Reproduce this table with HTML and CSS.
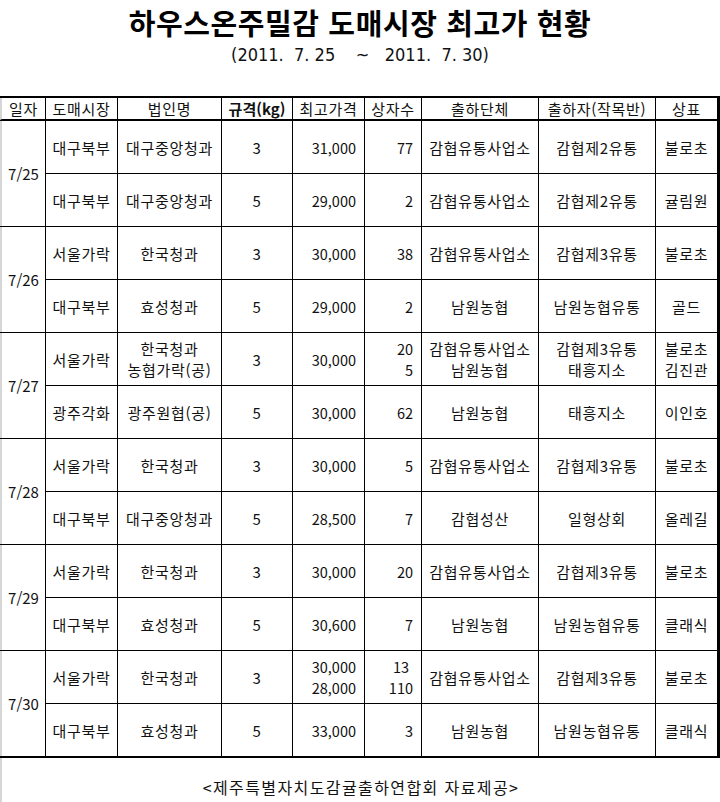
FILE: index.html
```html
<!DOCTYPE html>
<html lang="ko">
<head>
<meta charset="utf-8">
<title>하우스온주밀감 도매시장 최고가 현황</title>
<link rel="stylesheet" href="styles.css">
</head>
<body>
<div class="head">
  <h1 class="title">하우스온주밀감 도매시장 최고가 현황</h1>
  <p class="subtitle">(2011.  7. 25    ~   2011.  7. 30)</p>
</div>
<div class="grid">
  <div class="c th edge">일자</div>
  <div class="c th">도매시장</div>
  <div class="c th">법인명</div>
  <div class="c th bold">규격(kg)</div>
  <div class="c th">최고가격</div>
  <div class="c th">상자수</div>
  <div class="c th">출하단체</div>
  <div class="c th">출하자(작목반)</div>
  <div class="c th">상표</div>

  <div class="c date edge">7/25</div>
  <div class="c">대구북부</div><div class="c">대구중앙청과</div><div class="c">3</div><div class="c r">31,000</div><div class="c r">77</div><div class="c">감협유통사업소</div><div class="c">감협제2유통</div><div class="c">불로초</div>
  <div class="c">대구북부</div><div class="c">대구중앙청과</div><div class="c">5</div><div class="c r">29,000</div><div class="c r">2</div><div class="c">감협유통사업소</div><div class="c">감협제2유통</div><div class="c">귤림원</div>

  <div class="c date edge">7/26</div>
  <div class="c">서울가락</div><div class="c">한국청과</div><div class="c">3</div><div class="c r">30,000</div><div class="c r">38</div><div class="c">감협유통사업소</div><div class="c">감협제3유통</div><div class="c">불로초</div>
  <div class="c">대구북부</div><div class="c">효성청과</div><div class="c">5</div><div class="c r">29,000</div><div class="c r">2</div><div class="c">남원농협</div><div class="c">남원농협유통</div><div class="c">골드</div>

  <div class="c date edge">7/27</div>
  <div class="c">서울가락</div><div class="c">한국청과<br>농협가락(공)</div><div class="c">3</div><div class="c r">30,000</div><div class="c r">20<br>5</div><div class="c">감협유통사업소<br>남원농협</div><div class="c">감협제3유통<br>태흥지소</div><div class="c">불로초<br>김진관</div>
  <div class="c">광주각화</div><div class="c">광주원협(공)</div><div class="c">5</div><div class="c r">30,000</div><div class="c r">62</div><div class="c">남원농협</div><div class="c">태흥지소</div><div class="c">이인호</div>

  <div class="c date edge">7/28</div>
  <div class="c">서울가락</div><div class="c">한국청과</div><div class="c">3</div><div class="c r">30,000</div><div class="c r">5</div><div class="c">감협유통사업소</div><div class="c">감협제3유통</div><div class="c">불로초</div>
  <div class="c">대구북부</div><div class="c">대구중앙청과</div><div class="c">5</div><div class="c r">28,500</div><div class="c r">7</div><div class="c">감협성산</div><div class="c">일형상회</div><div class="c">올레길</div>

  <div class="c date edge">7/29</div>
  <div class="c">서울가락</div><div class="c">한국청과</div><div class="c">3</div><div class="c r">30,000</div><div class="c r">20</div><div class="c">감협유통사업소</div><div class="c">감협제3유통</div><div class="c">불로초</div>
  <div class="c">대구북부</div><div class="c">효성청과</div><div class="c">5</div><div class="c r">30,600</div><div class="c r">7</div><div class="c">남원농협</div><div class="c">남원농협유통</div><div class="c">클래식</div>

  <div class="c date edge">7/30</div>
  <div class="c">서울가락</div><div class="c">한국청과</div><div class="c">3</div><div class="c r"><span class="m">30,000<br>28,000</span></div><div class="c r"><span class="m"><span class="pad">13</span><br>110</span></div><div class="c">감협유통사업소</div><div class="c">감협제3유통</div><div class="c">불로초</div>
  <div class="c">대구북부</div><div class="c">효성청과</div><div class="c">5</div><div class="c r">33,000</div><div class="c r">3</div><div class="c">남원농협</div><div class="c">남원농협유통</div><div class="c">클래식</div>
</div>
<p class="foot">&lt;제주특별자치도감귤출하연합회 자료제공&gt;</p>
</body>
</html>
```
FILE: styles.css
```css
html, body {
  margin: 0;
  padding: 0;
  background: #fff;
}
body {
  width: 720px;
  font-family: "Noto Sans CJK KR", "Noto Sans", sans-serif;
  color: #111;
}
.head {
  padding-top: 6px;
  height: 90px;
  box-sizing: border-box;
}
.title {
  margin: 0;
  font-size: 29px;
  line-height: 32px;
  font-weight: bold;
  letter-spacing: 0.6px;
  text-align: center;
  color: #000;
}
.subtitle {
  margin: 6px 0 0;
  font-family: "Liberation Sans Narrow", "DejaVu Sans Condensed", "Noto Sans CJK KR", sans-serif;
  font-size: 18px;
  line-height: 22px;
  text-align: center;
  white-space: pre;
  color: #111;
}
.grid {
  margin-top: 6px;
  display: grid;
  grid-template-columns: 45px 71px 103px 70px 71px 56px 116px 116px 61px;
  grid-template-rows: 22px repeat(12, 52px);
  gap: 1px;
  background: #000;
  border-top: 2px solid #000;
  border-right: 3px solid #000;
  border-bottom: 2px solid #000;
  width: 717px;
}
.c {
  background: #fff;
  display: flex;
  align-items: center;
  justify-content: center;
  text-align: center;
  font-size: 15px;
  letter-spacing: 0.7px;
  line-height: 21px;
}
.th {
  font-size: 15px;
  border-bottom: 1px solid #000;
  box-sizing: border-box;
  height: 22px;
  line-height: 20px;
}
.bold { font-weight: bold; letter-spacing: 0; }
.date { grid-row: span 2; letter-spacing: 0; }
.edge {
  border-left: 2px solid #d6d6d6;
  box-sizing: border-box;
}
.r {
  justify-content: flex-end;
  text-align: right;
  padding-right: 8px;
  letter-spacing: 0;
  font-size: 14.5px;
}
.m { display: block; }
.pad { padding-right: 4px; }
.foot {
  margin: 0;
  border-left: 2px solid #d6d6d6;
  height: 44px;
  box-sizing: border-box;
  padding-top: 18px;
  font-size: 16px;
  letter-spacing: 1.4px;
  line-height: 22px;
  text-align: center;
  color: #111;
}
```
